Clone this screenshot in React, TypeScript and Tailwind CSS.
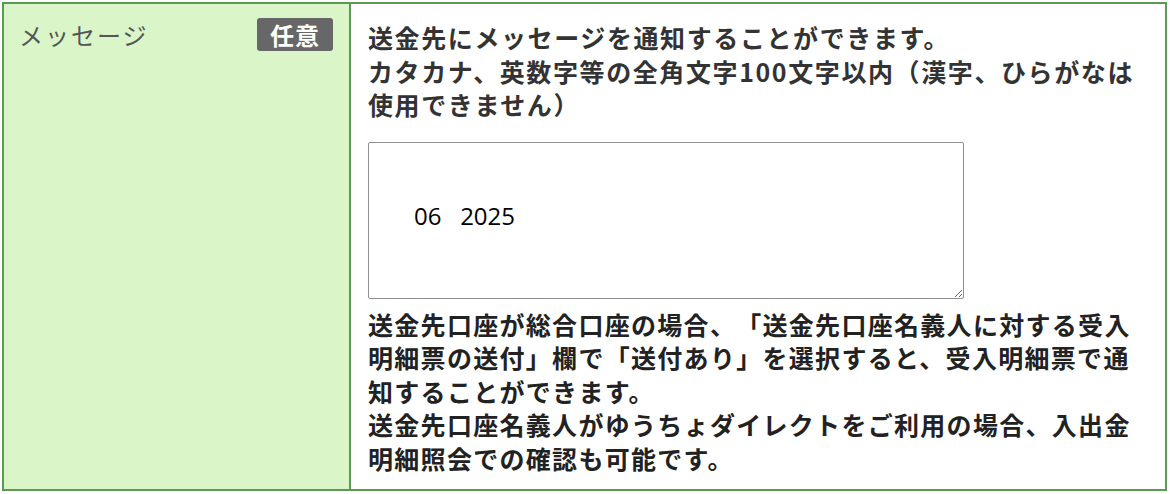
import React from "react";

const jp = { fontFamily: '"Noto Sans CJK JP", "Noto Sans", sans-serif' };

export default function App() {
  return (
    <div className="w-[1170px] h-[494px] bg-white p-[2px] overflow-hidden">
      <div className="flex w-[1165px] h-[489px] border-2 border-[#5a9a52]" style={jp}>
        <div className="w-[347px] shrink-0 bg-[#daf5c8] border-r-2 border-[#5a9a52] pt-[14px] pl-[15px] pr-[16px]">
          <div className="flex items-center justify-between">
            <span className="text-[24px] leading-[33px] text-[#555] tracking-[2px]">メッセージ</span>
            <span className="w-[76px] h-[33px] rounded-[3px] bg-[#676767] text-white font-bold text-[24px] leading-[33px] text-center tracking-[1px]">
              任意
            </span>
          </div>
        </div>
        <div className="flex-1 bg-white pl-[17px] pt-[17px] pb-[13px] [text-spacing-trim:space-all]">
          <div className="text-[25px] leading-[33.5px] font-bold text-[#333] tracking-[1.6px] whitespace-nowrap">
            <div>送金先にメッセージを通知することができます。</div>
            <div>カタカナ、英数字等の全角文字100文字以内（漢字、ひらがなは</div>
            <div>使用できません）</div>
          </div>
          <textarea
            readOnly
            defaultValue={"06   2025"}
            className="block mt-[20px] w-[596px] h-[157px] border border-[#8f8f8f] rounded-[2px] bg-white pl-[45px] pt-[57px] text-[24px] leading-[32px] text-black whitespace-pre outline-none"
            style={{ fontFamily: '"Open Sans", "Liberation Sans", sans-serif' }}
          />
          <div className="mt-[9px] text-[25px] leading-[33.5px] font-bold text-[#222] tracking-[1.3px] whitespace-nowrap">
            <div>送金先口座が総合口座の場合、「送金先口座名義人に対する受入</div>
            <div>明細票の送付」欄で「送付あり」を選択すると、受入明細票で通</div>
            <div>知することができます。</div>
            <div>送金先口座名義人がゆうちょダイレクトをご利用の場合、入出金</div>
            <div>明細照会での確認も可能です。</div>
          </div>
        </div>
      </div>
    </div>
  );
}
